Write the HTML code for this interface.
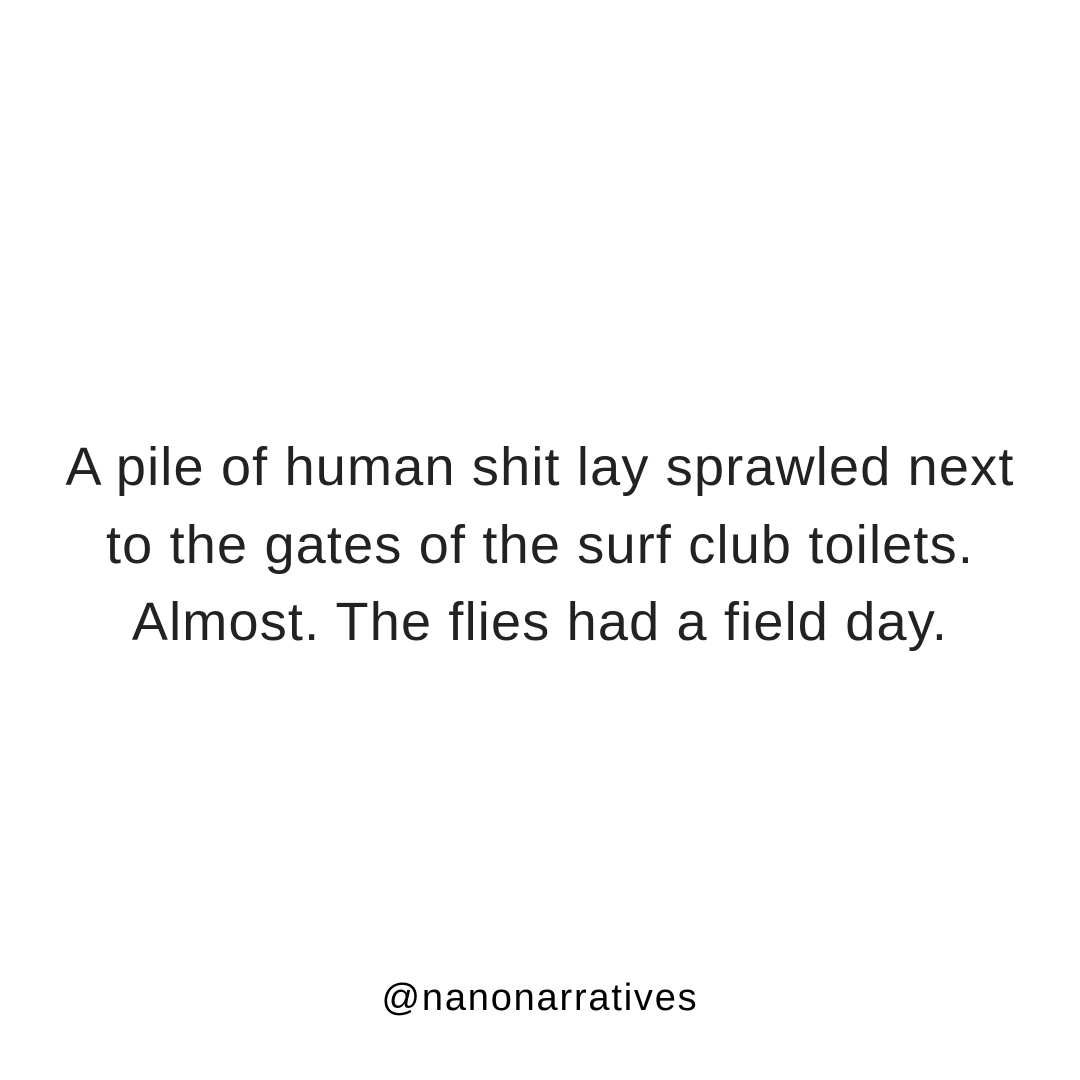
<!DOCTYPE html>
<html><head><meta charset="utf-8"><style>
html,body{margin:0;padding:0;background:#fff;}
body{width:1080px;height:1080px;position:relative;overflow:hidden;font-family:"Liberation Sans","DejaVu Sans",sans-serif;color:#222;}
.l{position:absolute;left:0;width:1080px;text-align:center;white-space:nowrap;font-size:54px;line-height:60px;letter-spacing:1.2px;}
.h{position:absolute;left:0;width:1080px;text-align:center;font-size:38px;line-height:40px;top:978px;color:#000;letter-spacing:1.8px;}
</style></head><body>
<div class="l" style="top:437px">A pile of human shit lay sprawled next</div>
<div class="l" style="top:515px">to the gates of the surf club toilets.</div>
<div class="l" style="top:592px">Almost. The flies had a field day.</div>
<div class="h">@nanonarratives</div>
</body></html>
